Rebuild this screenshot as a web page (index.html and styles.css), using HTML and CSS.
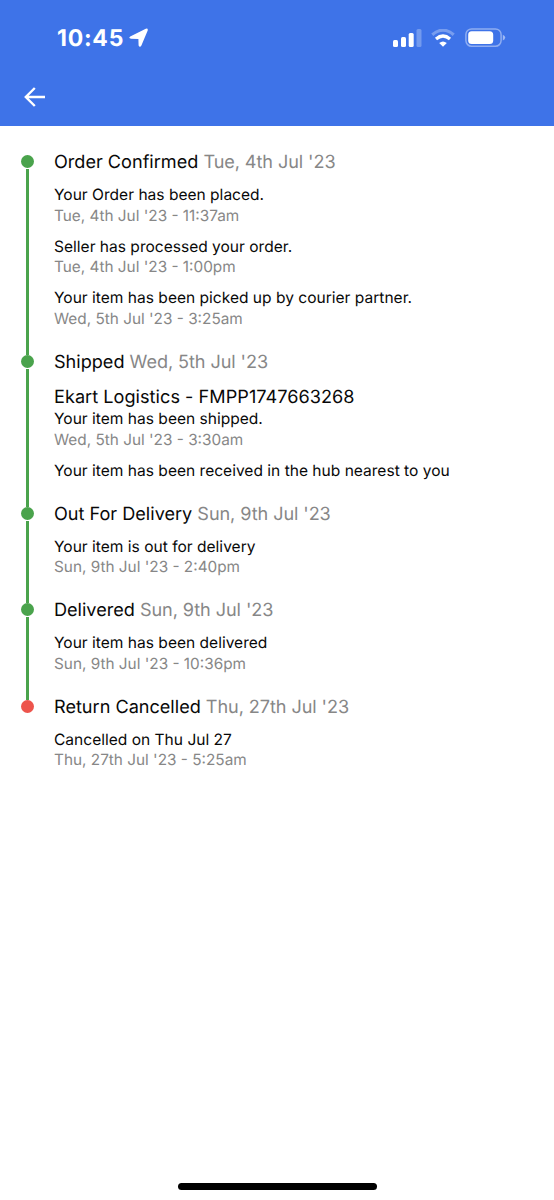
FILE: index.html
```html
<!DOCTYPE html>
<html lang="en">
<head>
<meta charset="utf-8">
<title>Order tracking</title>
<link rel="stylesheet" href="styles.css">
</head>
<body>
<div class="screen">
  <header class="header">
    <div class="status">
      <span class="clock">10:45</span>
      <svg class="location" width="20" height="20" viewBox="0 0 20 20"><path d="M1.2 8.4 16.8.8q2.4-.8 1.9 1.7L12.4 17.6q-1.6 2.5-2.8-.2L9.4 11 2.1 10.8Q-1 10 1.2 8.4Z"/></svg>
      <div class="indicators">
        <svg width="29" height="18" viewBox="0 0 29 18" fill="#fff"><rect x="0" y="11" width="5" height="7" rx="1.5"/><rect x="8" y="8" width="5" height="10" rx="1.5"/><rect x="15.7" y="4" width="5" height="14" rx="1.5"/><rect x="23.5" y="0" width="5" height="18" rx="1.5" opacity=".28"/></svg>
        <svg class="wifi" width="24" height="18" viewBox="0 0 24 18" fill="none" stroke="#fff" stroke-width="3.2"><path d="M1.3 5.7Q12-3.3 22.7 5.7" opacity=".3"/><path d="M5 10Q12 4 19 10"/><path d="M12 17.7 8.2 13.9Q12 10.9 15.8 13.9Z" fill="#fff" stroke="none"/></svg>
        <svg class="battery" width="41" height="20" viewBox="0 0 41 20"><rect x=".9" y=".9" width="35.2" height="17.4" rx="5.7" fill="none" stroke="#fff" stroke-opacity=".42" stroke-width="1.5"/><rect x="3.2" y="3.2" width="25" height="12.8" rx="3.5" fill="#fff"/><path d="M37.8 6.7q2.4 1 2.4 2.9t-2.4 2.9Z" fill="#fff" fill-opacity=".5"/></svg>
      </div>
    </div>
    <svg class="back" width="22" height="20" viewBox="0 0 22 20"><path d="M21 10H2M10.8 1 1.8 10l9 9"/></svg>
  </header>
  <main class="timeline">
    <section class="step">
      <div class="rail"><i class="dot"></i><i class="line"></i></div>
      <div class="content">
        <h2 class="title">Order Confirmed <span class="date">Tue, 4th Jul '23</span></h2>
        <div class="event"><p>Your Order has been placed.</p><p class="time">Tue, 4th Jul '23 - 11:37am</p></div>
        <div class="event"><p>Seller has processed your order.</p><p class="time">Tue, 4th Jul '23 - 1:00pm</p></div>
        <div class="event"><p>Your item has been picked up by courier partner.</p><p class="time">Wed, 5th Jul '23 - 3:25am</p></div>
      </div>
    </section>
    <section class="step">
      <div class="rail"><i class="dot"></i><i class="line"></i></div>
      <div class="content">
        <h2 class="title">Shipped <span class="date">Wed, 5th Jul '23</span></h2>
        <p class="courier">Ekart Logistics - FMPP1747663268</p>
        <div class="event"><p>Your item has been shipped.</p><p class="time">Wed, 5th Jul '23 - 3:30am</p></div>
        <div class="event"><p>Your item has been received in the hub nearest to you</p></div>
      </div>
    </section>
    <section class="step">
      <div class="rail"><i class="dot"></i><i class="line"></i></div>
      <div class="content">
        <h2 class="title">Out For Delivery <span class="date">Sun, 9th Jul '23</span></h2>
        <div class="event"><p>Your item is out for delivery</p><p class="time">Sun, 9th Jul '23 - 2:40pm</p></div>
      </div>
    </section>
    <section class="step">
      <div class="rail"><i class="dot"></i><i class="line"></i></div>
      <div class="content">
        <h2 class="title">Delivered <span class="date">Sun, 9th Jul '23</span></h2>
        <div class="event"><p>Your item has been delivered</p><p class="time">Sun, 9th Jul '23 - 10:36pm</p></div>
      </div>
    </section>
    <section class="step">
      <div class="rail"><i class="dot dot-cancelled"></i></div>
      <div class="content">
        <h2 class="title">Return Cancelled <span class="date">Thu, 27th Jul '23</span></h2>
        <div class="event"><p>Cancelled on Thu Jul 27</p><p class="time">Thu, 27th Jul '23 - 5:25am</p></div>
      </div>
    </section>
  </main>
  <footer class="home"><div class="home-bar"></div></footer>
</div>
</body>
</html>
```
FILE: styles.css
```css
* { box-sizing: border-box; }
body { margin: 0; background: #fff; color: #080808; font-family: Inter, "Liberation Sans", sans-serif; text-rendering: geometricPrecision; }
h2, p { margin: 0; font-weight: 400; white-space: nowrap; }
svg { display: block; flex: none; }

.screen { display: flex; flex-direction: column; height: 1200px; }

.header { height: 126px; padding: 22px 48px 0 24px; background: #3e73e8; }
.status { display: flex; align-items: center; height: 32px; padding-left: 33px; }
.clock { color: #fff; font-size: 23px; font-weight: 700; line-height: 32px; width: 67px; margin-right: 5px; letter-spacing: 0.75px; white-space: nowrap; }
.location { fill: #fff; }
.indicators { display: flex; align-items: center; margin-left: auto; }
.wifi { margin-left: 9px; }
.battery { margin-left: 10px; }
.back { margin-top: 33px; fill: none; stroke: #fff; stroke-width: 2.4; }

.timeline { flex: 1; padding: 25.4px 20px 0; }
.step { display: flex; gap: 20px; }
.rail { display: flex; flex-direction: column; align-items: center; flex: none; width: 14px; padding-top: 4.1px; }
.dot { width: 13px; height: 13px; border-radius: 50%; background: #4aa34c; }
.dot-cancelled { background: #ed544c; }
.line { flex: 1; width: 3px; margin: 1px 0 -4.1px; background: #4aa34c; }
.content { padding-bottom: 11px; }
.title { height: 22px; margin-bottom: 12px; font-size: 18.1px; line-height: 22px; }
.date, .time { color: #878787; }
.date { letter-spacing: -0.08px; }
.courier { font-size: 18.1px; line-height: 24.6px; letter-spacing: 0.04px; }
.event { margin-bottom: 10.3px; font-size: 15.55px; line-height: 20.6px; }
.time { font-size: 15.35px; }

.home { display: flex; justify-content: center; padding-bottom: 10px; }
.home-bar { width: 199px; height: 7px; border-radius: 4px; background: #000; }
```
